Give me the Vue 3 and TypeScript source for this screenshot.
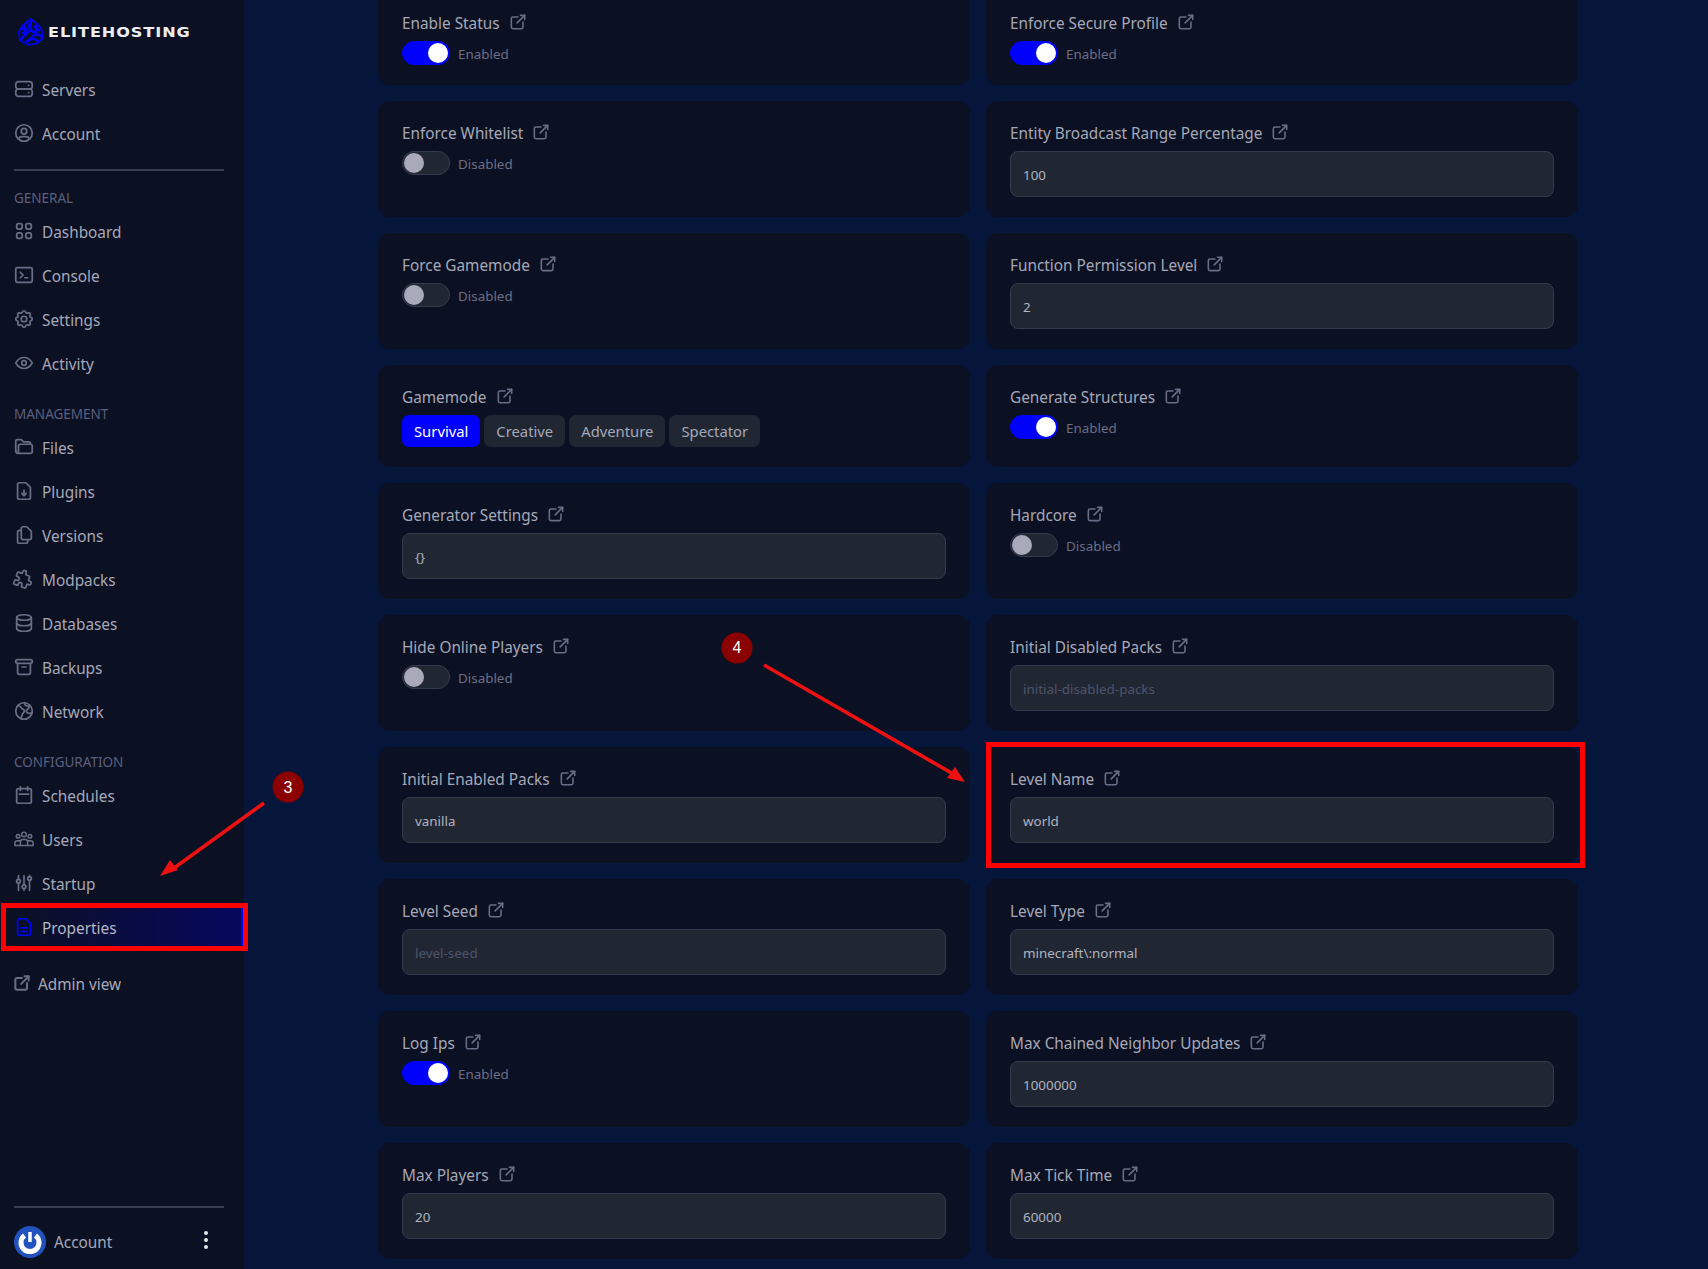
<template>
  <div class="page">
    <aside class="sidebar">
      <div class="logo">
        <svg class="logo-mark" viewBox="0 0 28 30" fill="none" stroke="#0000ff" stroke-width="2" stroke-linejoin="round">
          <path d="M14 1 20 6 25 11 27 21 21 27 12 29 2 24 1 15 5 8 Z" stroke-width="1.8" />
          <path d="M14 1 13 13 2 24M13 13 27 21M7 6 7 18M20 6 19 15M8 25 17 22 22 25M3 13 8 9M17 9 24 14" stroke-width="2.600" />
          <path d="M9 4 12 8 8 14 4 17M22 17 16 19 11 25" stroke-width="2" />
        </svg>
        <span class="logo-text">ELITEHOSTING</span>
      </div>

      <a v-for="item in topNav" :key="item.label" class="nav-item">
        <svg class="nav-icon" viewBox="0 0 24 24"><path v-for="d in icons[item.icon]" :key="d" :d="d" /></svg>
        <span>{{ item.label }}</span>
      </a>
      <div class="divider top"></div>

      <section v-for="group in navGroups" :key="group.title" class="nav-group">
        <div class="nav-title">{{ group.title }}</div>
        <a v-for="item in group.items" :key="item.label" class="nav-item" :class="{ active: item.label === 'Properties' }">
          <svg class="nav-icon" :class="`icon-${item.icon}`" viewBox="0 0 24 24"><path v-for="d in icons[item.icon]" :key="d" :d="d" /></svg>
          <span>{{ item.label }}</span>
        </a>
      </section>

      <a class="nav-item admin">
        <svg class="admin-icon" viewBox="0 0 24 24"><path v-for="d in icons.external" :key="d" :d="d" /></svg>
        <span>Admin view</span>
      </a>

      <div class="sidebar-foot">
        <div class="divider"></div>
        <div class="account">
          <svg class="avatar" viewBox="0 0 32 32">
            <circle cx="16" cy="16" r="16" fill="#2152bd" />
            <path d="M10.5 9.5a9 9 0 1 0 11 0" fill="none" stroke="#fff" stroke-width="5" />
            <path d="M16 6v10" stroke="#fff" stroke-width="3.5" />
          </svg>
          <span class="account-name">Account</span>
          <span class="kebab"><i></i><i></i><i></i></span>
        </div>
      </div>
    </aside>

    <main class="main">
      <div class="grid">
        <div v-for="field in fields" :key="field.label" class="card">
          <div class="label">
            <span>{{ field.label }}</span>
            <svg class="link-icon" viewBox="0 0 24 24"><path v-for="d in icons.external" :key="d" :d="d" /></svg>
          </div>

          <div v-if="field.kind === 'toggle'" class="toggle-row">
            <span class="toggle" :class="{ on: field.on }"><i></i></span>
            <span class="toggle-text">{{ field.on ? "Enabled" : "Disabled" }}</span>
          </div>

          <div v-else-if="field.kind === 'options'" class="options">
            <button v-for="(opt, i) in field.options" :key="opt" class="option" :class="{ selected: i === 0 }">{{ opt }}</button>
          </div>

          <input v-else class="input" readonly :value="field.value" :placeholder="field.placeholder" />
        </div>
      </div>
    </main>

    <!-- annotations drawn on top of the screenshot -->
    <svg class="notes" width="1708" height="1269" viewBox="0 0 1708 1269">
      <rect x="3.500" y="905.500" width="242" height="43" fill="none" stroke="#ff0000" stroke-width="5" />
      <rect x="988.500" y="744.500" width="594" height="121" fill="none" stroke="#ff0000" stroke-width="5" />
      <path d="M264 803 170 871" stroke="#ee1111" stroke-width="3.600" />
      <polygon points="160,876 170,860 178,870" fill="#ee1111" />
      <path d="M764 665 955 775" stroke="#ee1111" stroke-width="3.600" />
      <polygon points="965,782 947,778 955,767" fill="#ee1111" />
      <circle cx="288" cy="787" r="15.500" fill="#8b0000" />
      <text x="288" y="792.500" class="note-num">3</text>
      <circle cx="737" cy="648" r="15.500" fill="#8b0000" />
      <text x="737" y="652.500" class="note-num">4</text>
    </svg>
  </div>
</template>

<script setup lang="ts">
type Field = {
  label: string;
  kind: "toggle" | "input" | "options";
  on?: boolean;
  value?: string;
  placeholder?: string;
  options?: string[];
};

const filePath = "M17 21h-10a2 2 0 0 1 -2 -2v-14a2 2 0 0 1 2 -2h7l5 5v11a2 2 0 0 1 -2 2z";

const icons: Record<string, string[]> = {
  server: [
    "M6 4h12a3 3 0 0 1 3 3v2a3 3 0 0 1 -3 3h-12a3 3 0 0 1 -3 -3v-2a3 3 0 0 1 3 -3z",
    "M6 12h12a3 3 0 0 1 3 3v2a3 3 0 0 1 -3 3h-12a3 3 0 0 1 -3 -3v-2a3 3 0 0 1 3 -3z",
    "M17 8v.01",
    "M17 16v.01",
  ],
  user: [
    "M3 12a9 9 0 1 0 18 0a9 9 0 1 0 -18 0",
    "M9 10a3 3 0 1 0 6 0a3 3 0 1 0 -6 0",
    "M6.168 18.849a4 4 0 0 1 3.832 -2.849h4a4 4 0 0 1 3.834 2.855",
  ],
  grid: [
    "M4 6a2 2 0 0 1 2 -2h2a2 2 0 0 1 2 2v2a2 2 0 0 1 -2 2h-2a2 2 0 0 1 -2 -2z",
    "M14 6a2 2 0 0 1 2 -2h2a2 2 0 0 1 2 2v2a2 2 0 0 1 -2 2h-2a2 2 0 0 1 -2 -2z",
    "M4 16a2 2 0 0 1 2 -2h2a2 2 0 0 1 2 2v2a2 2 0 0 1 -2 2h-2a2 2 0 0 1 -2 -2z",
    "M14 16a2 2 0 0 1 2 -2h2a2 2 0 0 1 2 2v2a2 2 0 0 1 -2 2h-2a2 2 0 0 1 -2 -2z",
  ],
  terminal: [
    "M8 9l3 3l-3 3",
    "M13 15h3",
    "M5 4h14a2 2 0 0 1 2 2v12a2 2 0 0 1 -2 2h-14a2 2 0 0 1 -2 -2v-12a2 2 0 0 1 2 -2z",
  ],
  settings: [
    "M10.325 4.317c.426 -1.756 2.924 -1.756 3.35 0a1.724 1.724 0 0 0 2.573 1.066c1.543 -.94 3.31 .826 2.37 2.37a1.724 1.724 0 0 0 1.065 2.572c1.756 .426 1.756 2.924 0 3.35a1.724 1.724 0 0 0 -1.066 2.573c.94 1.543 -.826 3.31 -2.37 2.37a1.724 1.724 0 0 0 -2.572 1.065c-.426 1.756 -2.924 1.756 -3.35 0a1.724 1.724 0 0 0 -2.573 -1.066c-1.543 .94 -3.31 -.826 -2.37 -2.37a1.724 1.724 0 0 0 -1.065 -2.572c-1.756 -.426 -1.756 -2.924 0 -3.35a1.724 1.724 0 0 0 1.066 -2.573c-.94 -1.543 .826 -3.31 2.37 -2.37c1 .608 2.296 .07 2.572 -1.065z",
    "M9 12a3 3 0 1 0 6 0a3 3 0 0 0 -6 0",
  ],
  eye: [
    "M9.500 12a2.500 2.500 0 1 0 5 0a2.500 2.500 0 0 0 -5 0",
    "M21 12c-2.400 4 -5.400 6 -9 6c-3.600 0 -6.600 -2 -9 -6c2.400 -4 5.400 -6 9 -6c3.600 0 6.600 2 9 6",
  ],
  folder: [
    "M3 16v-10a2 2 0 0 1 2 -2h4l2.500 2.500h5.500a2 2 0 0 1 2 2",
    "M3 16a3 3 0 0 0 3 3h13a2 2 0 0 0 2 -2v-6a2 2 0 0 0 -2 -2h-11a2 2 0 0 0 -2 2v8",
  ],
  fileDown: [filePath, "M12 17v-6", "M9.500 14.500l2.500 2.500l2.500 -2.500"],
  copy: [
    "M18 17h-7a2 2 0 0 1 -2 -2v-10a2 2 0 0 1 2 -2h4l5 5v7a2 2 0 0 1 -2 2z",
    "M16 17v2a2 2 0 0 1 -2 2h-7a2 2 0 0 1 -2 -2v-10a2 2 0 0 1 2 -2h2",
  ],
  puzzle: [
    "M4 7h3a1 1 0 0 0 1 -1v-1a2 2 0 0 1 4 0v1a1 1 0 0 0 1 1h3a1 1 0 0 1 1 1v3a1 1 0 0 0 1 1h1a2 2 0 0 1 0 4h-1a1 1 0 0 0 -1 1v3a1 1 0 0 1 -1 1h-3a1 1 0 0 1 -1 -1v-1a2 2 0 0 0 -4 0v1a1 1 0 0 1 -1 1h-3a1 1 0 0 1 -1 -1v-3a1 1 0 0 1 1 -1h1a2 2 0 0 0 0 -4h-1a1 1 0 0 1 -1 -1v-3a1 1 0 0 1 1 -1",
  ],
  database: [
    "M4 6a8 3 0 1 0 16 0a8 3 0 1 0 -16 0",
    "M4 6v6a8 3 0 0 0 16 0v-6",
    "M4 12v6a8 3 0 0 0 16 0v-6",
  ],
  archive: [
    "M5 4h14a2 2 0 0 1 2 2a2 2 0 0 1 -2 2h-14a2 2 0 0 1 -2 -2a2 2 0 0 1 2 -2z",
    "M5 8v10a2 2 0 0 0 2 2h10a2 2 0 0 0 2 -2v-10",
    "M10 12h4",
  ],
  world: [
    "M3 12a9 9 0 1 0 18 0a9 9 0 1 0 -18 0",
    "M5.500 6c2 .5 3 1.500 4 3s3 1 3 3s-2 2 -2.500 4s-1 3 -1.500 4",
    "M13 3c-.5 2 .5 3.500 2.500 3.500s2.500 1 1.500 2.500s-2.500 1.500 -2.500 3s2 2.500 3.500 2.500s3 -.5 3 -.5",
  ],
  calendar: [
    "M4 7a2 2 0 0 1 2 -2h12a2 2 0 0 1 2 2v12a2 2 0 0 1 -2 2h-12a2 2 0 0 1 -2 -2z",
    "M16 3v4",
    "M8 3v4",
    "M7 11h10",
  ],
  users: [
    "M9.500 7a2.500 2.500 0 1 0 5 0a2.500 2.500 0 0 0 -5 0",
    "M3.500 9a2 2 0 1 0 4 0a2 2 0 0 0 -4 0",
    "M16.500 9a2 2 0 1 0 4 0a2 2 0 0 0 -4 0",
    "M8 19v-4a2.500 2.500 0 0 1 2.500 -2.500h3a2.500 2.500 0 0 1 2.500 2.500v4z",
    "M8 19h-6v-2a3 3 0 0 1 3 -3h3.500",
    "M16 19h6v-2a3 3 0 0 0 -3 -3h-3.500",
  ],
  sliders: [
    "M4 10a2 2 0 1 0 4 0a2 2 0 0 0 -4 0",
    "M6 4v4",
    "M6 12v8",
    "M10 16a2 2 0 1 0 4 0a2 2 0 0 0 -4 0",
    "M12 4v10",
    "M12 18v2",
    "M16 7a2 2 0 1 0 4 0a2 2 0 0 0 -4 0",
    "M18 4v1",
    "M18 9v11",
  ],
  fileText: [filePath, "M9 13h6", "M9 17h6"],
  external: [
    "M12 6h-6a2 2 0 0 0 -2 2v10a2 2 0 0 0 2 2h10a2 2 0 0 0 2 -2v-6",
    "M11 13l9 -9",
    "M15 4h5v5",
  ],
};

const topNav = [
  { label: "Servers", icon: "server" },
  { label: "Account", icon: "user" },
];

const navGroups = [
  {
    title: "GENERAL",
    items: [
      { label: "Dashboard", icon: "grid" },
      { label: "Console", icon: "terminal" },
      { label: "Settings", icon: "settings" },
      { label: "Activity", icon: "eye" },
    ],
  },
  {
    title: "MANAGEMENT",
    items: [
      { label: "Files", icon: "folder" },
      { label: "Plugins", icon: "fileDown" },
      { label: "Versions", icon: "copy" },
      { label: "Modpacks", icon: "puzzle" },
      { label: "Databases", icon: "database" },
      { label: "Backups", icon: "archive" },
      { label: "Network", icon: "world" },
    ],
  },
  {
    title: "CONFIGURATION",
    items: [
      { label: "Schedules", icon: "calendar" },
      { label: "Users", icon: "users" },
      { label: "Startup", icon: "sliders" },
      { label: "Properties", icon: "fileText" },
    ],
  },
];

const toggle = (label: string, on: boolean): Field => ({ label, kind: "toggle", on });
const input = (label: string, value: string): Field => ({ label, kind: "input", value });
const empty = (label: string, placeholder: string): Field => ({ label, kind: "input", placeholder });

const fields: Field[] = [
  toggle("Enable Status", true),
  toggle("Enforce Secure Profile", true),
  toggle("Enforce Whitelist", false),
  input("Entity Broadcast Range Percentage", "100"),
  toggle("Force Gamemode", false),
  input("Function Permission Level", "2"),
  { label: "Gamemode", kind: "options", options: ["Survival", "Creative", "Adventure", "Spectator"] },
  toggle("Generate Structures", true),
  input("Generator Settings", "{}"),
  toggle("Hardcore", false),
  toggle("Hide Online Players", false),
  empty("Initial Disabled Packs", "initial-disabled-packs"),
  input("Initial Enabled Packs", "vanilla"),
  input("Level Name", "world"),
  empty("Level Seed", "level-seed"),
  input("Level Type", "minecraft\\:normal"),
  toggle("Log Ips", true),
  input("Max Chained Neighbor Updates", "1000000"),
  input("Max Players", "20"),
  input("Max Tick Time", "60000"),
];
</script>

<style>
body {
  background: #05163a;
}
</style>

<style scoped>
.page {
  position: relative;
  display: flex;
  width: 1708px;
  height: 1269px;
  overflow: hidden;
  background: #05163a;
  font-family: "Noto Sans", "Liberation Sans", sans-serif;
  color: #a6a8b8;
}

.sidebar {
  display: flex;
  flex-direction: column;
  flex: none;
  width: 244px;
  height: 100%;
  background: #0b1122;
}

.logo {
  display: flex;
  align-items: center;
  gap: 4px;
  flex: none;
  height: 68px;
  padding: 0 0 4px 18px;
  box-sizing: border-box;
}

.logo-mark {
  width: 26px;
  height: 28px;
}

.logo-text {
  display: inline-block;
  font-family: "DejaVu Sans", sans-serif;
  font-size: 14px;
  font-weight: 700;
  letter-spacing: 0.800px;
  color: #eceef2;
  line-height: 1;
  transform: scaleX(1.15);
  transform-origin: left center;
}

.nav-item {
  display: flex;
  align-items: center;
  gap: 7px;
  height: 44px;
  margin-left: 6px;
  margin-right: 1px;
  padding-left: 7px;
  font-size: 15.350px;
  box-sizing: border-box;
  flex: none;
}

.nav-icon {
  flex: none;
  width: 22px;
  height: 22px;
  margin-top: -3px;
  fill: none;
  stroke: #6b6d86;
  stroke-width: 1.900;
  stroke-linecap: round;
  stroke-linejoin: round;
}

.icon-puzzle {
  transform: rotate(20deg);
}

.icon-users {
  stroke-width: 1.600;
}

.nav-item.active {
  background: linear-gradient(90deg, rgba(7, 7, 100, 0) 0%, #07075f 100%);
  border-right: 2px solid #0000ff;
  color: #b4b6c4;
}

.nav-item.active .nav-icon {
  stroke: #0000ff;
}

.divider {
  height: 2px;
  margin: 0 20px 0 14px;
  background: #3b3d52;
}

.divider.top {
  margin-top: 13px;
}

.nav-group {
  margin-top: 17px;
}

.nav-group + .nav-group {
  margin-top: 18px;
}

.nav-title {
  height: 22px;
  padding-left: 14px;
  font-size: 13.500px;
  line-height: 20px;
  color: #5c5f7c;
}

.nav-item.admin {
  margin-top: 12px;
  margin-left: 0;
  padding-left: 12px;
  gap: 6px;
}

.admin-icon {
  width: 20px;
  height: 20px;
  margin-top: -3px;
  fill: none;
  stroke: #6b6d86;
  stroke-width: 2.400;
  stroke-linecap: round;
  stroke-linejoin: round;
}

.sidebar-foot {
  margin-top: auto;
  padding-bottom: 11px;
}

.account {
  display: flex;
  align-items: center;
  padding: 18px 36px 0 14px;
}

.avatar {
  width: 32px;
  height: 32px;
  flex: none;
}

.account-name {
  margin-left: 8px;
  font-size: 15.350px;
}

.kebab {
  display: flex;
  flex-direction: column;
  gap: 3px;
  margin-left: auto;
  margin-top: -4px;
}

.kebab i {
  display: block;
  width: 4px;
  height: 4px;
  border-radius: 50%;
  background: #e4e5ea;
}

.main {
  flex: 1;
  min-width: 0;
  padding-left: 134px;
}

.grid {
  display: grid;
  grid-template-columns: 592px 592px;
  gap: 16px;
  margin-top: -9px;
}

.card {
  display: flex;
  flex-direction: column;
  padding: 21px 24px 20px;
  border-radius: 12px;
  background: #0b1122;
}

.label {
  display: flex;
  align-items: center;
  height: 22px;
  margin-bottom: 7px;
  font-size: 15.350px;
  color: #a6a8b8;
}

.link-icon {
  flex: none;
  width: 20px;
  height: 20px;
  margin-left: 8px;
  margin-top: -3px;
  fill: none;
  stroke: #6b6d86;
  stroke-width: 1.900;
  stroke-linecap: round;
  stroke-linejoin: round;
}

.toggle-row {
  display: flex;
  align-items: center;
  gap: 8px;
  height: 24px;
}

.toggle {
  position: relative;
  display: block;
  width: 48px;
  height: 24px;
  box-sizing: border-box;
  border: 1px solid #373b4e;
  border-radius: 12px;
  background: #202733;
}

.toggle i {
  position: absolute;
  top: 1px;
  left: 1px;
  width: 20px;
  height: 20px;
  border-radius: 50%;
  background: #a9a9ba;
}

.toggle.on {
  border-color: #0000ff;
  background: #0000ff;
}

.toggle.on i {
  left: 25px;
  background: #fff;
}

.toggle-text {
  margin-top: 2px;
  font-size: 13.400px;
  color: #6b6d86;
}

.options {
  display: flex;
  gap: 4px;
}

.option {
  height: 32px;
  padding: 0 12px;
  border: 0;
  border-radius: 7px;
  background: #202733;
  font-family: inherit;
  font-size: 14.800px;
  color: #a6a8b8;
}

.option.selected {
  background: #0000ff;
  color: #fff;
}

.input {
  display: block;
  width: 100%;
  height: 46px;
  padding: 1px 12px 0;
  box-sizing: border-box;
  border: 1px solid #373b4e;
  border-radius: 8px;
  outline: 0;
  background: #202733;
  font-family: inherit;
  font-size: 13.400px;
  color: #b1b3c0;
}

.input::placeholder {
  color: #4f536a;
  opacity: 1;
}

.notes {
  position: absolute;
  top: 0;
  left: 0;
  pointer-events: none;
}

.note-num {
  font-family: "Liberation Sans", sans-serif;
  font-size: 16px;
  fill: #fff;
  text-anchor: middle;
}
</style>
